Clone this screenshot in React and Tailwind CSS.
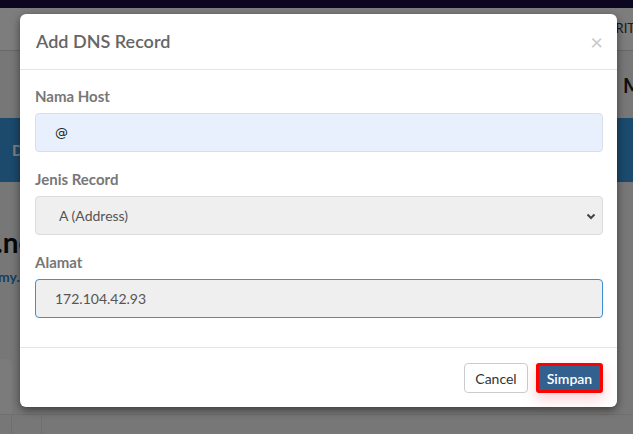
import React from "react";

const Field = ({ label, children }) => (
  <div className="flex flex-col">
    <label className="mb-[7px] text-[15px] leading-5 font-bold text-[#777]">{label}</label>
    {children}
  </div>
);

const PageBehind = () => (
  <div className="flex h-[434px] w-[633px] flex-col overflow-hidden bg-[#eeeeee]">
    <div className="h-[8px] bg-[#1a0c40]" />
    <div className="flex h-[43px] items-center justify-end border-b border-[#d0d0d0] bg-[#fafafa]">
      <span className="-mr-[2px] text-[13px] text-[#333]">VERIT</span>
    </div>
    <div className="flex h-[67px] items-center justify-end">
      <span className="-mr-[9px] text-[20px] font-bold text-[#222]">M</span>
    </div>
    <div className="flex h-[64px] items-center bg-[#3794d8] pl-[12px]">
      <span className="text-[15px] font-bold text-white">D</span>
    </div>
    <div className="flex flex-col pt-[44px]">
      <span className="-ml-[4px] text-[28px] leading-8 font-bold text-[#111]">.net</span>
      <span className="mt-[8px] -ml-[2px] text-[14px] font-bold text-[#2a7fd0]">my.id</span>
    </div>
    <div className="mt-[72px] flex h-[55px]">
      <div className="w-[12px] rounded-tr-[6px] bg-[#f6f6f6]" />
    </div>
    <div className="flex flex-1 border-t border-[#dedede]">
      <div className="w-[12px] border-r border-[#dedede]" />
      <div className="w-[30px] border-r border-[#dedede]" />
    </div>
  </div>
);

export default function App() {
  return (
    <div className="relative h-[434px] w-[633px] overflow-hidden font-['Lato','Open_Sans',sans-serif]">
      <PageBehind />
      <div className="absolute inset-0 bg-black/50">
        <div className="mt-[14px] ml-[20px] w-[597px] rounded-[6px] bg-white shadow-[0_3px_9px_rgba(0,0,0,0.5)]">
          <div className="flex h-[56px] items-center justify-between border-b border-[#e5e5e5] pr-[14px] pl-[16px]">
            <h4 className="text-[18px] font-semibold text-[#666]">Add DNS Record</h4>
            <button className="text-[22px] leading-none text-[#c8c8c8]">×</button>
          </div>
          <div className="flex flex-col gap-[17px] pt-[16px] pr-[14px] pb-[29px] pl-[15px]">
            <Field label="Nama Host">
              <input
                readOnly
                value="@"
                className="h-[39px] rounded-[4px] border border-[#d9dfe6] bg-[#e8f0fe] px-[19px] font-['DejaVu_Sans',sans-serif] text-[13px] text-[#222] outline-none"
              />
            </Field>
            <Field label="Jenis Record">
              <div className="flex h-[39px] items-center justify-between rounded-[4px] border border-[#dcdcdc] bg-[#efefef] pr-[6px] pl-[23px]">
                <span className="text-[14px] text-[#555]">A (Address)</span>
                <svg width="10" height="10" viewBox="0 0 10 10" className="text-[#444]">
                  <path d="M1.5 3.5 5 7l3.5-3.5" fill="none" stroke="currentColor" strokeWidth="2" />
                </svg>
              </div>
            </Field>
            <Field label="Alamat">
              <input
                readOnly
                value="172.104.42.93"
                className="h-[39px] rounded-[4px] border border-[#3d8fd6] bg-[#efefef] px-[19px] text-[14px] text-[#555] outline-none"
              />
            </Field>
          </div>
          <div className="flex justify-end gap-[8px] border-t border-[#e5e5e5] px-[14px] pt-[15px] pb-[14px]">
            <button className="h-[30px] w-[64px] rounded-[4px] border border-[#ccc] bg-white text-[14px] text-[#333]">
              Cancel
            </button>
            <button className="h-[30px] w-[67px] rounded-[3px] border-[3px] border-[#ff0000] bg-[#32608f] text-[14px] font-semibold text-white shadow-[0_6px_14px_rgba(230,60,90,0.25)]">
              Simpan
            </button>
          </div>
        </div>
      </div>
    </div>
  );
}
